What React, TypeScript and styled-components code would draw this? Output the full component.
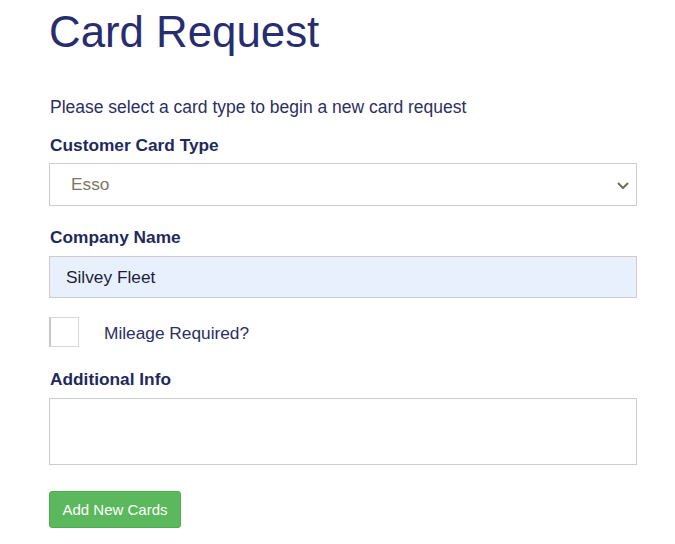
import React from "react";
import styled, { createGlobalStyle } from "styled-components";

const Global = createGlobalStyle`
  html, body { margin: 0; padding: 0; background: #fff; }
  body { font-family: "Liberation Sans", Arial, sans-serif; color: #2c2f63; }
  * { box-sizing: border-box; }
`;

const Page = styled.div`
  width: 675px;
  padding: 0 38px 0 49px;
  display: flex;
  flex-direction: column;
`;

const Title = styled.h1`
  margin: 8px 0 0;
  font-size: 43.8px;
  line-height: 48px;
  font-weight: 400;
  color: #272d6f;
`;

const Intro = styled.p`
  margin: 40px 0 0 1px;
  font-size: 17.5px;
  line-height: 22px;
  color: #2c2f63;
`;

const Label = styled.label<{ $top: number }>`
  display: block;
  margin: ${(p) => p.$top}px 0 0 1px;
  font-size: 17.3px;
  line-height: 22px;
  font-weight: 700;
  color: #1f2a5c;
`;

const SelectBox = styled.div`
  margin-top: 7px;
  height: 43px;
  border: 1px solid #cccccc;
  display: flex;
  align-items: center;
  justify-content: space-between;
  padding: 0 6px 0 21px;
  font-size: 17.3px;
  color: #7c7663;
`;

const Input = styled.div`
  margin-top: 8px;
  height: 42px;
  border: 1px solid #cccccc;
  background: #e8f0fe;
  display: flex;
  align-items: center;
  padding: 0 16px;
  font-size: 17.3px;
  color: #1b1e3a;
`;

const CheckRow = styled.div`
  margin-top: 19px;
  display: flex;
  align-items: center;
  gap: 25px;
`;

const CheckBox = styled.span`
  width: 30px;
  height: 30px;
  border: 1px solid #d6d6d6;
  border-left: 2px solid #c8c8c8;
  background: #fff;
`;

const CheckLabel = styled.span`
  padding-top: 3px;
  font-size: 17.3px;
  color: #2c2f63;
`;

const TextArea = styled.div`
  margin-top: 8px;
  height: 67px;
  border: 1px solid #cccccc;
`;

const Button = styled.button`
  margin-top: 26px;
  align-self: flex-start;
  width: 132px;
  height: 37px;
  border: 1px solid #4cae4c;
  border-radius: 3px;
  background: #5cb85c;
  color: #fff;
  font-family: "Liberation Sans", Arial, sans-serif;
  font-size: 15px;
  padding: 0;
`;

export default function App() {
  return (
    <>
      <Global />
      <Page>
        <Title>Card Request</Title>
        <Intro>Please select a card type to begin a new card request</Intro>
        <Label $top={16}>Customer Card Type</Label>
        <SelectBox>
          <span>Esso</span>
          <svg width="14" height="10" viewBox="0 0 14 10">
            <path d="M2 3 L7 8 L12 3" fill="none" stroke="#6f6e57" strokeWidth="2" />
          </svg>
        </SelectBox>
        <Label $top={20}>Company Name</Label>
        <Input>Silvey Fleet</Input>
        <CheckRow>
          <CheckBox />
          <CheckLabel>Mileage Required?</CheckLabel>
        </CheckRow>
        <Label $top={21}>Additional Info</Label>
        <TextArea />
        <Button>Add New Cards</Button>
      </Page>
    </>
  );
}
